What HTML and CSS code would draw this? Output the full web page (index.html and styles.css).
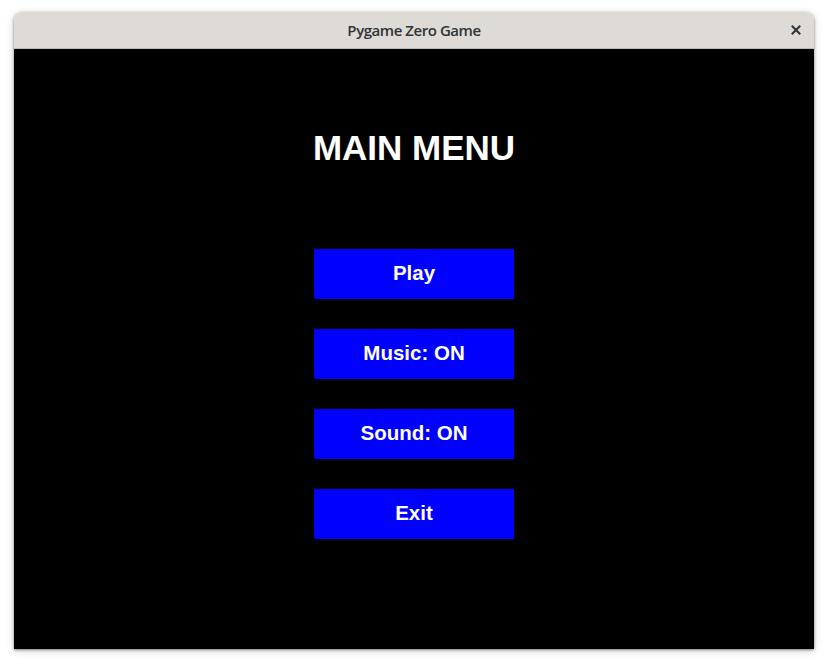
FILE: index.html
```html
<!DOCTYPE html>
<html>
<head>
<meta charset="utf-8">
<link rel="stylesheet" href="styles.css">
</head>
<body>
<div class="window">
  <div class="titlebar">
    <span class="title">Pygame Zero Game</span>
    <span class="close">
      <svg width="10" height="10" viewBox="0 0 10 10"><path d="M1.5 1.5 L8.5 8.5 M8.5 1.5 L1.5 8.5" stroke="#2e3436" stroke-width="2" stroke-linecap="square"/></svg>
    </span>
  </div>
  <div class="game">
    <h1 class="heading">MAIN MENU</h1>
    <div class="menu">
      <div class="btn">Play</div>
      <div class="btn">Music: ON</div>
      <div class="btn">Sound: ON</div>
      <div class="btn">Exit</div>
    </div>
  </div>
</div>
</body>
</html>
```
FILE: styles.css
```css
html, body {
  margin: 0;
  padding: 0;
  background: #ffffff;
}
body {
  padding: 12px 14px;
}
.window {
  width: 800px;
  border-radius: 8px 8px 0 0;
  box-shadow: 0 1px 3px rgba(0,0,0,0.45), 0 2px 10px rgba(0,0,0,0.15);
  overflow: hidden;
}
.titlebar {
  height: 36px;
  background: #dedad5;
  border-bottom: 1px solid #bfb9b2;
  display: flex;
  align-items: center;
  justify-content: center;
  position: relative;
}
.title {
  font-family: "Open Sans", "Noto Sans", sans-serif;
  font-weight: 600;
  font-size: 15px;
  color: #2e3436;
  letter-spacing: -0.45px;
  padding-bottom: 1px;
}
.close {
  position: absolute;
  right: 13px;
  top: 13px;
  width: 10px;
  height: 10px;
  display: flex;
}
.game {
  height: 600px;
  background: #000000;
  display: flex;
  flex-direction: column;
  align-items: center;
}
.heading {
  margin: 79px 0 0 0;
  height: 40px;
  line-height: 40px;
  font-family: "Liberation Sans", Arial, sans-serif;
  font-weight: bold;
  font-size: 35px;
  color: #ffffff;
}
.menu {
  margin-top: 81px;
  display: flex;
  flex-direction: column;
  gap: 30px;
}
.btn {
  width: 200px;
  height: 50px;
  box-sizing: border-box;
  padding-bottom: 3px;
  background: #0000ff;
  color: #ffffff;
  font-family: "Liberation Sans", Arial, sans-serif;
  font-weight: bold;
  font-size: 20.5px;
  display: flex;
  align-items: center;
  justify-content: center;
}
```
